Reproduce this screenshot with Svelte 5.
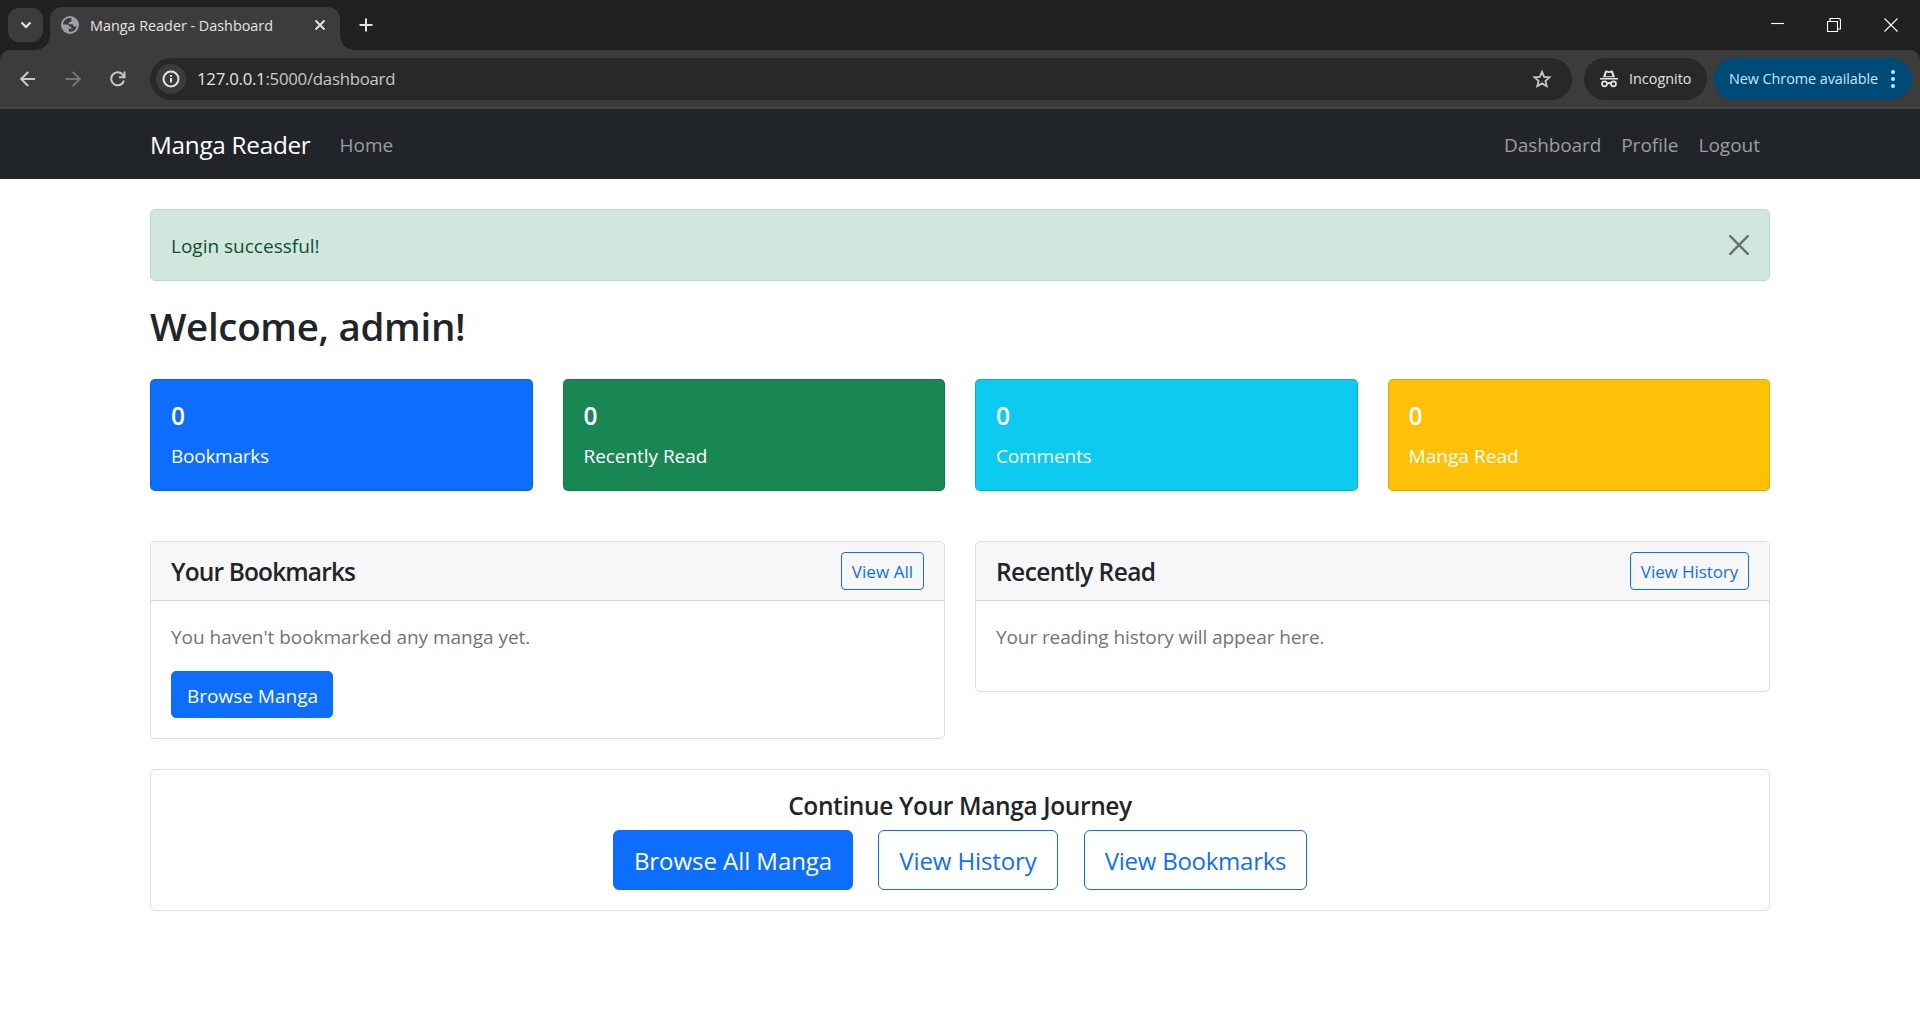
<script>
  const stats = [
    { label: 'Bookmarks', tone: 'primary' },
    { label: 'Recently Read', tone: 'success' },
    { label: 'Comments', tone: 'info' },
    { label: 'Manga Read', tone: 'warning' }
  ];
</script>

<div class="screen">
  <div class="tabstrip">
    <div class="tabsearch">
      <svg width="12" height="8" viewBox="0 0 12 8"><path d="M1.500 1.500 6 6l4.500-4.500" /></svg>
    </div>
    <div class="tab">
      <svg class="globe" width="18" height="18" viewBox="0 0 18 18">
        <circle cx="9" cy="9" r="9" />
        <path d="M8.600 2C5 2.200 2.200 4.800 2 8.600h3.800c1.800 0 2.200.9 2.200 2h2.200v2.200H7.800v2.800c3.600.8 7.200-1.800 7.900-5.200h-2.200c-1.400 0-1.600-1.200-1.600-2.200H7.800V6h1.600c1.100 0 1.100-1 1.100-2V2.200c-.6-.2-1.200-.2-1.900-.2z" />
      </svg>
      <span class="t tabtitle">Manga Reader - Dashboard</span>
      <svg class="tabclose" width="12" height="12" viewBox="0 0 12 12"><path d="M1.500 1.500l9 9M10.500 1.500l-9 9" /></svg>
    </div>
    <svg class="plus" width="14" height="14" viewBox="0 0 14 14"><path d="M7 .5v13M.5 7h13" /></svg>
    <div class="winctl">
      <svg width="13" height="14" viewBox="0 0 13 14"><path d="M0 5.500h13" /></svg>
      <svg width="14" height="14" viewBox="0 0 14 14"><path d="M.5 3.500h10v10H.5zM3 3V.5h8.500q2 0 2 2V11H11" /></svg>
      <svg width="14" height="14" viewBox="0 0 14 14"><path d="M.5.5l13 13M13.500.5l-13 13" /></svg>
    </div>
  </div>

  <div class="toolbarback">
    <div class="toolbar">
      <svg class="nav" width="16" height="16" viewBox="0 0 16 16"><path d="M15 8H1.500M8.200 1 1.200 8l7 7" /></svg>
      <svg class="nav dim" width="16" height="16" viewBox="0 0 16 16"><path d="M.5 8h14M7.800 1l7 7-7 7" /></svg>
      <svg class="nav" width="16" height="16" viewBox="0 0 16 16"><path d="M14 9.500A6.500 6.500 0 1 1 13 4L14.300 6M14.500 .5V6.200H9" /></svg>
      <div class="omnibox">
        <div class="site">
          <svg width="18" height="18" viewBox="0 0 18 18"><circle cx="9" cy="9" r="7.500" /><path d="M9 8v4.500M9 5v1.700" /></svg>
        </div>
        <span class="url">127.0.0.1<em>:5000/dashboard</em></span>
        <svg class="star" width="20" height="20" viewBox="0 0 20 20"><path d="M10 2.800l2.200 5 5.400.5-4.100 3.600 1.200 5.300L10 14.400l-4.700 2.800 1.200-5.300-4.100-3.600 5.400-.5z" /></svg>
      </div>
      <div class="incog">
        <svg width="18" height="18" viewBox="0 0 18 18">
          <path class="f" d="M0 8h18v1.600H0zM3 7.300 5 1.200Q5.400.2 6.400.5L9 1.200 11.600.5Q12.600.2 13 1.200L15 7.300z" />
          <path class="cut" d="M5.600 6.300 6.700 2.500 9 3l2.300-.5 1.100 3.800z" />
          <circle cx="4.500" cy="13.800" r="2.500" /><circle cx="13.500" cy="13.800" r="2.500" /><path d="M7 13.500q2-1 4 0" />
        </svg>
        <span class="ui inc">Incognito</span>
      </div>
      <div class="update">
        <span class="ui upd">New Chrome available</span>
        <svg width="4" height="18" viewBox="0 0 4 18"><circle cx="2" cy="2" r="2" /><circle cx="2" cy="9" r="2" /><circle cx="2" cy="16" r="2" /></svg>
      </div>
    </div>
  </div>

  <nav class="navbar">
    <span class="t brand">Manga Reader</span>
    <span class="t link home">Home</span>
    <div class="right">
      <span class="t link snug">Dashboard</span>
      <span class="t link">Profile</span>
      <span class="t link">Logout</span>
    </div>
  </nav>

  <main>
    <div class="alert">
      <span class="t">Login successful!</span>
      <svg width="20" height="20" viewBox="0 0 20 20"><path d="M1.200 1.200l17.600 17.600M18.800 1.200 1.200 18.800" /></svg>
    </div>
    <h2><span class="t">Welcome, admin!</span></h2>

    <div class="stats">
      {#each stats as s}
        <div class="stat {s.tone}">
          <h5><span class="t">0</span></h5>
          <p><span class="t">{s.label}</span></p>
        </div>
      {/each}
    </div>

    <div class="panels">
      <section class="card">
        <header><h5 class="bookmarks-title"><span class="t">Your Bookmarks</span></h5><button class="sm">View All</button></header>
        <div class="body">
          <p><span class="t">You haven't bookmarked any manga yet.</span></p>
          <button class="solid browse">Browse Manga</button>
        </div>
      </section>
      <section class="card">
        <header><h5 class="recent-title"><span class="t">Recently Read</span></h5><button class="sm wide">View History</button></header>
        <div class="body">
          <p><span class="t snug">Your reading history will appear here.</span></p>
        </div>
      </section>
    </div>

    <section class="card journey">
      <h5><span class="t">Continue Your Manga Journey</span></h5>
      <div class="actions">
        <button class="solid lg a"><span class="t">Browse All Manga</span></button>
        <button class="lg b"><span class="t">View History</span></button>
        <button class="lg c"><span class="t">View Bookmarks</span></button>
      </div>
    </section>
  </main>
</div>

<style>
  :global(body) { margin: 0; background: #fff; }
  .screen { width: 1920px; height: 1020px; overflow: hidden; background: #fff; color: #212529; font-family: 'Open Sans', 'Noto Sans', sans-serif; font-size: 19px; line-height: 30px; }
  * { box-sizing: border-box; }
  svg { display: block; flex: none; fill: none; stroke: #e3e3e3; }
  span { white-space: nowrap; }
  .t { display: inline-block; transform: translateY(1px); }
  .snug { letter-spacing: -.1px; }
  h2, h5, p { margin: 0; }

  .tabstrip { height: 50px; background: #202221; display: flex; align-items: flex-start; }
  .tabsearch { width: 35px; height: 34px; margin: 8px 7px 0 8px; border-radius: 11px; background: #3c3c3c; display: flex; align-items: center; justify-content: center; }
  .tabsearch svg { stroke-width: 2.200; }
  .tab { position: relative; width: 290px; height: 43px; margin-top: 7px; border-radius: 12px 12px 0 0; background: #3c3c3c; display: flex; align-items: center; padding: 0 14px 7px 11px; }
  .tab::before, .tab::after { content: ''; position: absolute; bottom: 0; width: 14px; height: 14px; }
  .tab::before { left: -14px; background: radial-gradient(circle at 0 0, transparent 13.500px, #3c3c3c 14px); }
  .tab::after { right: -14px; background: radial-gradient(circle at 100% 0, transparent 13.500px, #3c3c3c 14px); }
  .globe circle { fill: #9aa0a6; stroke: none; }
  .globe path { fill: #3c3c3c; stroke: none; }
  .tabtitle { margin-left: 11px; font-size: 14.400px; letter-spacing: -.02px; color: #e3e3e3; }
  .tabclose { margin-left: auto; stroke-width: 2; }
  .plus { margin: 18px 0 0 19px; stroke-width: 2; }
  .winctl { margin: 18px 22px 0 auto; display: flex; gap: 43px; }
  .winctl svg { stroke: #fff; stroke-width: 1.100; }

  .toolbarback { background: #202221; }
  .toolbar { height: 59px; border-radius: 10px 10px 0 0; background: #3c3c3c; border-bottom: 2px solid #474747; display: flex; align-items: center; padding: 1px 8px 0 20px; }
  .nav { stroke: #c7c7c7; stroke-width: 2; margin-right: 29px; }
  .nav.dim { stroke: #757575; }
  .omnibox { width: 1422px; height: 42px; margin-left: -5px; border-radius: 21px; background: #282828; display: flex; align-items: center; padding: 0 20px 0 6px; }
  .site { width: 30px; height: 30px; border-radius: 50%; background: #3c3c3c; display: flex; align-items: center; justify-content: center; }
  .site svg { stroke-width: 2; }
  .url { margin-left: 11px; font-size: 16.800px; letter-spacing: -.26px; color: #e3e3e3; }
  .url em { font-style: normal; color: #c7c7c7; }
  .star { margin-left: auto; stroke: #c7c7c7; stroke-width: 1.800; }
  .incog, .update { height: 42px; margin-bottom: 1px; border-radius: 21px; display: flex; align-items: center; }
  .incog { width: 123px; margin-left: 12px; background: #282828; padding-left: 16px; }
  .incog svg { stroke-width: 1.800; }
  .incog .f { fill: #e3e3e3; stroke: none; }
  .incog .cut { fill: #282828; stroke: none; }
  .ui { font-size: 14.400px; color: #e3e3e3; }
  .inc { margin-left: 11px; }
  .update { width: 198px; margin-left: 7px; background: #004a77; padding: 0 17px 0 15px; }
  .update svg { margin-left: auto; fill: #c2e7ff; stroke: none; }
  .upd { color: #c2e7ff; letter-spacing: -.06px; }

  .navbar { height: 70px; background: #212529; display: flex; align-items: center; padding: 0 160px 0 150px; }
  .brand { font-size: 24.300px; letter-spacing: -.28px; color: #fff; }
  .link { color: #9b9d9e; }
  .home { margin-left: 29px; }
  .right { margin-left: auto; display: flex; gap: 20px; }

  main { padding: 30px 150px 0; }
  .alert { height: 72px; border: 1px solid #badbcc; border-radius: 5px; background: #d1e7dd; color: #0f5132; display: flex; align-items: center; justify-content: space-between; padding: 0 20px; }
  .alert svg { stroke: #68736e; stroke-width: 2.500; stroke-linecap: round; }
  h2 { margin-top: 20px; height: 48px; line-height: 48px; font-size: 38.500px; font-weight: 600; letter-spacing: -.32px; }
  h5 { font-size: 24.500px; line-height: 30px; font-weight: 600; letter-spacing: -.38px; }
  .stats { margin-top: 30px; display: grid; grid-template-columns: repeat(4, 1fr); gap: 30px; }
  .stat { height: 112px; padding: 20px; border: 1px solid rgba(0, 0, 0, .125); border-radius: 5px; color: #fff; }
  .stat p { margin-top: 10px; }
  .primary { background: #0d6efd; }
  .primary p { letter-spacing: -.25px; }
  .success { background: #198754; }
  .success p { letter-spacing: -.05px; }
  .info { background: #0dcaf0; }
  .info p { letter-spacing: -.15px; }
  .warning { background: #ffc107; }
  .warning p { letter-spacing: .05px; }

  .panels { margin-top: 50px; display: grid; grid-template-columns: 1fr 1fr; gap: 30px; align-items: start; }
  .card { border: 1px solid #dfdfdf; border-radius: 5px; overflow: hidden; }
  header { height: 59px; background: #f7f7f7; border-bottom: 1px solid #d8d8d8; display: flex; align-items: center; justify-content: space-between; padding: 0 20px; }
  .bookmarks-title { letter-spacing: -.86px; }
  .recent-title { letter-spacing: -.56px; }
  .body { padding: 20px; color: #6c757d; }
  .body p { margin-bottom: 20px; letter-spacing: -.03px; }
  button { font: inherit; line-height: 1; color: #0d6efd; background: transparent; border: 1px solid #0d6efd; border-radius: 5px; padding: 0; display: block; }
  .solid { background: #0d6efd; color: #fff; width: 162px; height: 47px; }
  .browse { padding: 3px 0 0 1px; }
  .sm { width: 83px; height: 38px; border-radius: 4px; font-size: 17px; letter-spacing: .05px; }
  .wide { width: 119px; letter-spacing: -.08px; }
  .journey { margin-top: 30px; height: 142px; padding-top: 20px; text-align: center; }
  .actions { margin-top: 10px; display: flex; justify-content: center; gap: 25px; }
  .lg { height: 60px; font-size: 24px; border-radius: 6px; }
  .a { width: 240px; letter-spacing: -.05px; }
  .b { width: 180px; letter-spacing: -.1px; }
  .c { width: 223px; margin-left: 1px; letter-spacing: -.25px; }
</style>
